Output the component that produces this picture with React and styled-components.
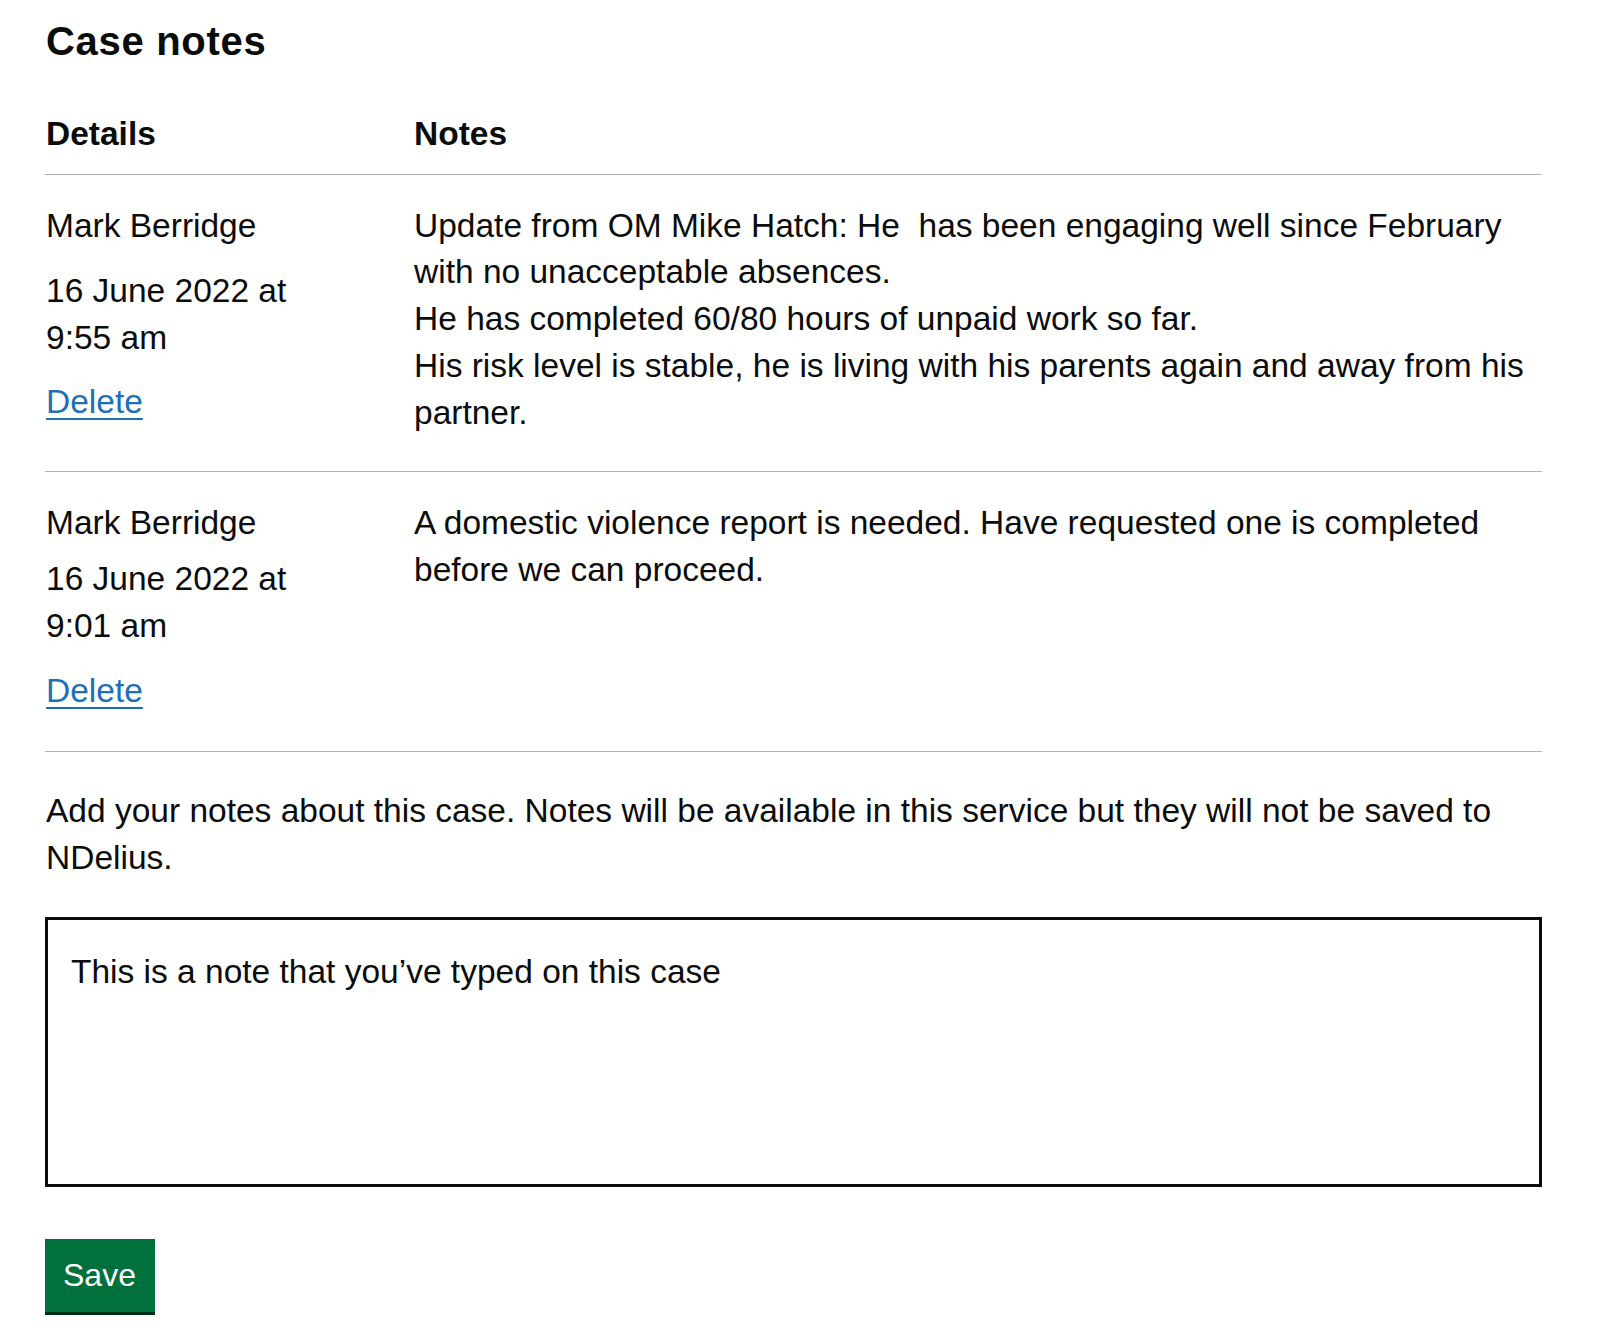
import React from "react";
import styled, { createGlobalStyle } from "styled-components";

const GlobalStyle = createGlobalStyle`
  body {
    margin: 0;
    background: #ffffff;
    color: #0b0c0c;
    font-family: "Liberation Sans", Arial, sans-serif;
  }
`;

const Page = styled.main`
  padding: 18px 58px 40px 45px;
  font-size: 33.5px;
  line-height: 46.7px;
`;

const Heading = styled.h1`
  margin: 0 0 47px 1px;
  font-size: 40px;
  line-height: 46px;
  font-weight: 700;
  letter-spacing: 0.7px;
`;

const Table = styled.table`
  width: 100%;
  border-collapse: collapse;
  table-layout: fixed;
`;

const HeadCell = styled.th`
  width: ${(p) => p.$width || "auto"};
  padding: 0 20px 16px 1px;
  text-align: left;
  font-weight: 700;
  border-bottom: 1px solid #b1b4b6;
  vertical-align: bottom;

  &:last-child {
    padding-right: 0;
  }
`;

const Cell = styled.td`
  padding: 28px 20px ${(p) => p.$bottom}px 1px;
  vertical-align: top;
  border-bottom: 1px solid #b1b4b6;

  &:last-child {
    padding-right: 0;
  }
`;

const NoteText = styled.div`
  white-space: pre-wrap;
`;

const Name = styled.div``;

const DateText = styled.div`
  margin-top: ${(p) => p.$gap}px;
`;

const DeleteRow = styled.div`
  margin-top: 18px;
`;

const DeleteLink = styled.a`
  color: #1d70b8;
  text-decoration: underline;
  text-decoration-thickness: 2px;
  text-underline-offset: 5px;
  cursor: pointer;
`;

const Hint = styled.p`
  margin: 36px 0 0 1px;
`;

const NoteInput = styled.textarea`
  display: block;
  box-sizing: border-box;
  width: 100%;
  height: 270px;
  margin-top: 35px;
  padding: 29px 23px;
  border: 3px solid #0b0c0c;
  border-radius: 0;
  font-family: "Liberation Sans", Arial, sans-serif;
  font-size: 33.5px;
  line-height: 46.7px;
  color: #0b0c0c;
  resize: none;
  outline: none;
`;

const SaveButton = styled.button`
  display: block;
  margin-top: 52px;
  padding: 14px 19px 15px 18px;
  border: 0;
  border-radius: 0;
  background: #00703c;
  box-shadow: 0 3px 0 #002d18;
  color: #ffffff;
  font-family: "Liberation Sans", Arial, sans-serif;
  font-size: 32px;
  line-height: 44px;
  cursor: pointer;
`;

const notes = [
  {
    author: "Mark Berridge",
    date: "16 June 2022 at",
    time: "9:55 am",
    gap: 18.5,
    bottom: 35,
    text:
      "Update from OM Mike Hatch: He  has been engaging well since February with no unacceptable absences.\nHe has completed 60/80 hours of unpaid work so far.\nHis risk level is stable, he is living with his parents again and away from his partner.",
  },
  {
    author: "Mark Berridge",
    date: "16 June 2022 at",
    time: "9:01 am",
    gap: 9.4,
    bottom: 37,
    text:
      "A domestic violence report is needed. Have requested one is completed before we can proceed.",
  },
];

export default function App() {
  return (
    <>
      <GlobalStyle />
      <Page>
        <Heading>Case notes</Heading>
        <Table>
          <thead>
            <tr>
              <HeadCell $width="347px">Details</HeadCell>
              <HeadCell>Notes</HeadCell>
            </tr>
          </thead>
          <tbody>
            {notes.map((n, i) => (
              <tr key={i}>
                <Cell $bottom={n.bottom}>
                  <Name>{n.author}</Name>
                  <DateText $gap={n.gap}>
                    {n.date}
                    <br />
                    {n.time}
                  </DateText>
                  <DeleteRow>
                    <DeleteLink href="#">Delete</DeleteLink>
                  </DeleteRow>
                </Cell>
                <Cell $bottom={n.bottom}>
                  <NoteText>{n.text}</NoteText>
                </Cell>
              </tr>
            ))}
          </tbody>
        </Table>
        <Hint>
          Add your notes about this case. Notes will be available in this
          service but they will not be saved to NDelius.
        </Hint>
        <NoteInput defaultValue="This is a note that you’ve typed on this case" />
        <SaveButton type="button">Save</SaveButton>
      </Page>
    </>
  );
}
